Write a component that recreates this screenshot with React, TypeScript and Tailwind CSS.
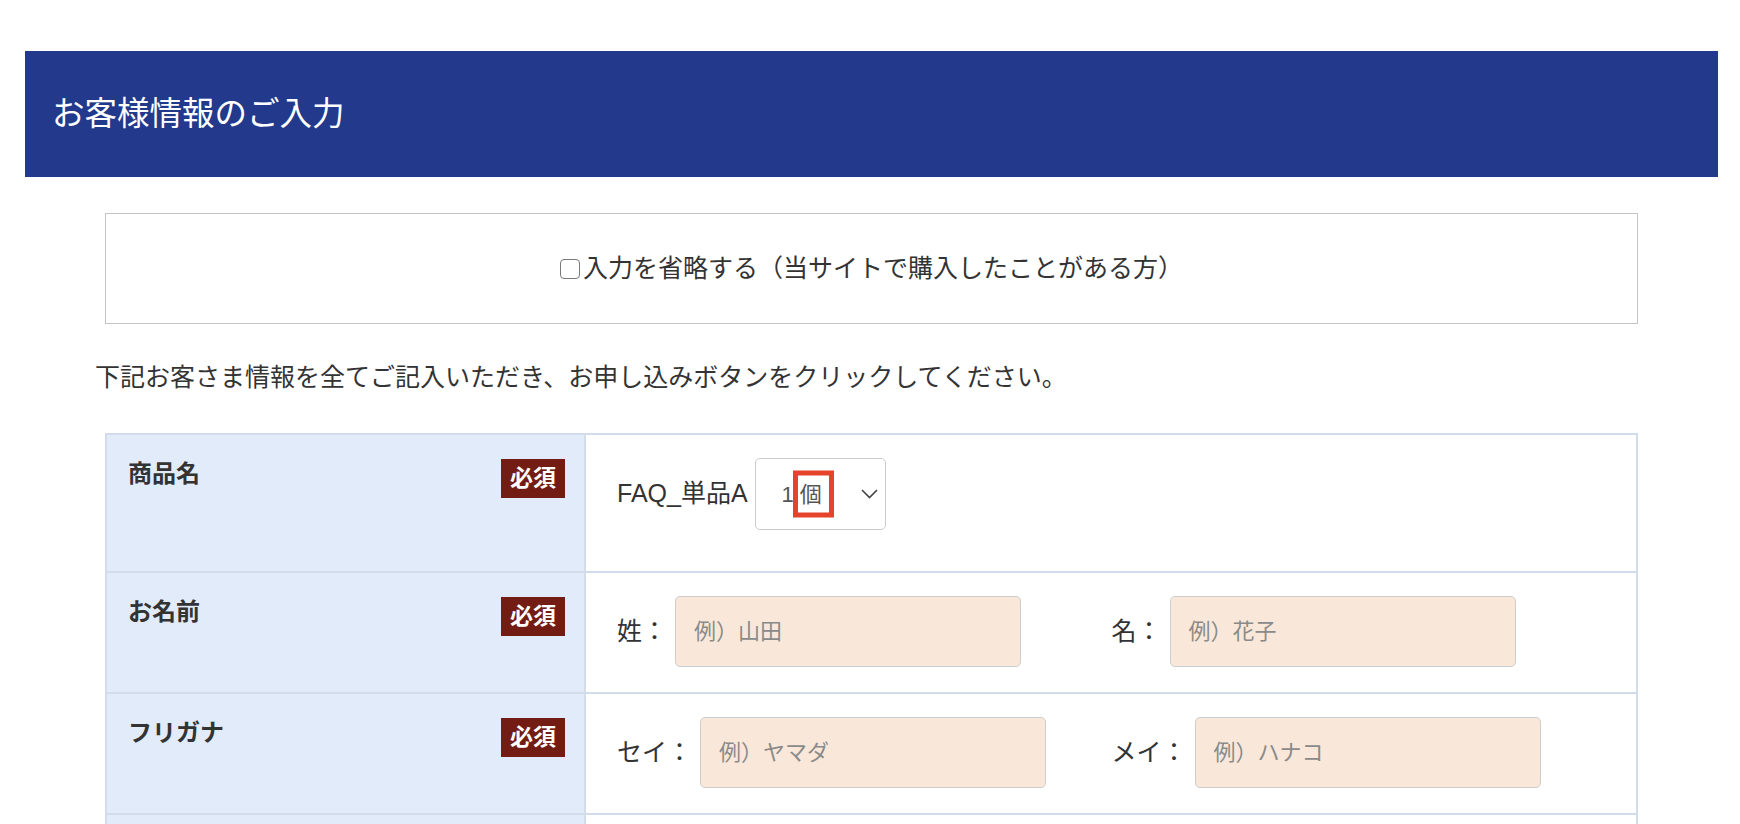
import React from 'react';

// Required-field badge shown in the label column
const Badge: React.FC = () => (
    <span className="shrink-0 h-[39px] px-[9px] bg-[#731c14] text-white font-bold text-[23px] leading-[39px]">必須</span>
);

interface RowProps {
    label?: string;
    height: string;
    children?: React.ReactNode;
}

const Row: React.FC<RowProps> = ({ label, height, children }) => (
    <div className={`flex border-b-2 border-[#d3dcea] ${height}`}>
        <div className="w-[479px] shrink-0 bg-[#e2ebfa] border-r-2 border-[#d3dcea] flex items-start justify-between pl-[21px] pr-[19px] pt-[24px]">
            {label && (
                <>
                    <span className="font-bold text-[24px] leading-[30px] text-[#333]">{label}</span>
                    <Badge />
                </>
            )}
        </div>
        <div className="flex-1 min-w-0 bg-white pl-[31px] pr-[30px] pt-[23px]">{children}</div>
    </div>
);

interface NameFieldProps {
    label: string;
    placeholder: string;
}

const NameField: React.FC<NameFieldProps> = ({ label, placeholder }) => (
    <div className="flex items-center gap-[8px]">
        <span className="text-[25px] text-[#333] whitespace-nowrap">{label}</span>
        <input
            type="text"
            placeholder={placeholder}
            className="w-[346px] h-[71px] bg-[#f9e8d9] border border-[#cdcdcd] rounded-[5px] px-[18px] text-[22px] text-[#333] placeholder:text-[#8a8a8a] outline-none"
        />
    </div>
);

export default function App() {
    return (
        <div className="min-h-screen bg-white font-[family-name:'Liberation_Sans','Noto_Sans_CJK_JP',sans-serif] text-[#333]">
            <div className="mt-[51px] ml-[25px] mr-[22px] h-[126px] bg-[#22398c] flex items-center pl-[27px]">
                <h1 className="text-white text-[32.5px] font-normal">お客様情報のご入力</h1>
            </div>

            <div className="mt-[36px] ml-[105px] mr-[102px] h-[111px] border border-[#c4c4c4] flex items-center justify-center">
                <label className="flex items-center text-[25px] text-[#333]">
                    <input
                        type="checkbox"
                        className="appearance-none shrink-0 w-[20px] h-[20px] border-[1.5px] border-[#7a7a7a] rounded-[4px] bg-white mr-[3px]"
                    />
                    <span>入力を省略する（当サイトで購入したことがある方）</span>
                </label>
            </div>

            <p className="mt-[35px] ml-[95px] text-[25px] leading-[37px] text-[#333]">
                下記お客さま情報を全てご記入いただき、お申し込みボタンをクリックしてください。
            </p>

            <div className="mt-[37px] ml-[105px] mr-[102px] border-t-2 border-x-2 border-[#d3dcea]">
                <Row label="商品名" height="h-[138px]">
                    <div className="flex items-center gap-[7px]">
                        <span className="text-[25px] text-[#333]">FAQ_単品A</span>
                        <div className="w-[131px] h-[72px] border border-[#cccccc] rounded-[5px] bg-white flex items-center justify-between pl-[26px] pr-[7px] text-[22px] text-[#555]">
                            <span className="flex items-center">
                                1
                                <span className="relative ml-[6px]">
                                    個
                                    <span className="absolute left-[-7px] right-[-12px] top-1/2 -translate-y-1/2 h-[47px] border-[5px] border-[#e6432c]"></span>
                                </span>
                            </span>
                            <svg width="17" height="10" viewBox="0 0 17 10" fill="none" stroke="#444" strokeWidth="1.6">
                                <polyline points="1,1 8.5,8.5 16,1" />
                            </svg>
                        </div>
                    </div>
                </Row>
                <Row label="お名前" height="h-[121px]">
                    <div className="grid grid-cols-2">
                        <NameField label="姓：" placeholder="例）山田" />
                        <NameField label="名：" placeholder="例）花子" />
                    </div>
                </Row>
                <Row label="フリガナ" height="h-[121px]">
                    <div className="grid grid-cols-2">
                        <NameField label="セイ：" placeholder="例）ヤマダ" />
                        <NameField label="メイ：" placeholder="例）ハナコ" />
                    </div>
                </Row>
                <Row height="h-[121px]" />
            </div>
        </div>
    );
}
